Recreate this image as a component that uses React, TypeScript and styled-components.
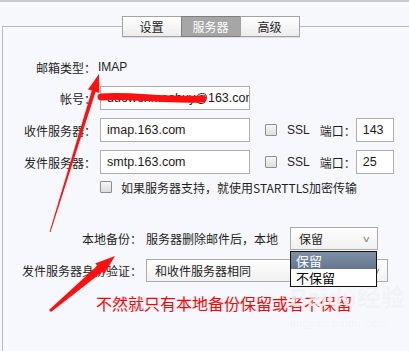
import React from 'react';
import styled, { createGlobalStyle } from 'styled-components';

const GlobalStyle = createGlobalStyle`
  html, body {
    margin: 0;
    padding: 0;
    background: #f7f8fd;
  }
  body {
    font-family: "Noto Sans CJK SC", "Liberation Sans", sans-serif;
    font-size: 12px;
    color: #1e1e1e;
  }
`;

const Page = styled.div`
  position: relative;
  width: 409px;
  height: 351px;
  overflow: hidden;
  box-sizing: border-box;
  border-top: 2px solid #c8c9d1;
  padding-top: 24px;
`;

const Frame = styled.div`
  margin-left: 2px;
  width: 417px;
  height: 340px;
  box-sizing: border-box;
  border-top: 1px solid #b9b9b9;
  border-left: 1px solid #b9b9b9;
`;

const TabBar = styled.div`
  display: flex;
  justify-content: center;
  margin-top: -11px;
`;

const Tab = styled.div<{ $active?: boolean }>`
  width: 60px;
  height: 21px;
  box-sizing: border-box;
  display: flex;
  align-items: center;
  justify-content: center;
  font-size: 12px;
  margin-left: -1px;
  border: 1px solid ${({ $active }) => ($active ? '#7f7f7f' : '#a3a3a3')};
  color: ${({ $active }) => ($active ? '#ffffff' : '#222')};
  background: ${({ $active }) =>
    $active ? '#a6a6a6' : 'linear-gradient(#ffffff, #ececec)'};
  box-shadow: 0 1px 0 #dedee6;
`;

const Form = styled.div`
  display: flex;
  flex-direction: column;
`;

const Row = styled.div<{ $mt: number; $label?: number }>`
  display: grid;
  grid-template-columns: ${({ $label }) => $label ?? 93}px auto;
  column-gap: 4px;
  align-items: center;
  height: 24px;
  margin-top: ${({ $mt }) => $mt}px;
`;

const Label = styled.div`
  text-align: right;
  white-space: nowrap;
`;

const Value = styled.div`
  display: flex;
  align-items: center;
  white-space: nowrap;
`;

const Plain = styled.span`
  font-family: "Liberation Sans", "Noto Sans CJK SC", sans-serif;
  font-size: 12px;
  margin-left: -2px;
`;

const TextBox = styled.div<{ $w: number }>`
  width: ${({ $w }) => $w}px;
  height: 24px;
  box-sizing: border-box;
  border: 1px solid #aeaeae;
  background: #fff;
  padding: 0 6px;
  display: flex;
  align-items: center;
  overflow: hidden;
  white-space: nowrap;
  font-family: "Liberation Sans", sans-serif;
  font-size: 12.5px;
  color: #1a1a1a;
`;

const Check = styled.span`
  display: inline-block;
  width: 12px;
  height: 12px;
  box-sizing: border-box;
  border: 1px solid #8e8e8e;
  border-radius: 1px;
  background: linear-gradient(#f6f6f6, #dcdcdc);
`;

const Ssl = styled.span`
  font-family: "Liberation Sans", sans-serif;
  font-size: 12px;
  margin: 0 10px 0 10px;
`;

const Inline = styled.span<{ $ml?: number }>`
  margin-left: ${({ $ml }) => $ml ?? 0}px;
`;

const SelectWrap = styled.div`
  position: relative;
`;

const SelectBox = styled.div<{ $w: number }>`
  width: ${({ $w }) => $w}px;
  height: 23px;
  box-sizing: border-box;
  border: 1px solid #ababab;
  background: linear-gradient(#ffffff, #f1f1f1);
  display: flex;
  align-items: center;
  justify-content: space-between;
  padding: 0 8px 0 8px;
`;

const Chevron = styled.span`
  font-size: 9px;
  color: #7a7a7a;
  transform: scaleX(1.3);
`;

const DropList = styled.div`
  position: absolute;
  left: 0;
  top: 24px;
  width: 87px;
  box-sizing: border-box;
  border: 1px solid #111;
  background: #fff;
  z-index: 2;
`;

const Option = styled.div<{ $sel?: boolean }>`
  height: 17px;
  line-height: 17px;
  padding-left: 5px;
  font-size: 13px;
  color: ${({ $sel }) => ($sel ? '#fff' : '#000')};
  background: ${({ $sel }) => ($sel ? 'linear-gradient(#7d90a6, #64778e)' : '#fff')};
`;

const Note = styled.div`
  margin-top: 9px;
  height: 24px;
  display: flex;
  align-items: center;
  padding-left: 93px;
  color: #ff0000;
  font-size: 16px;
`;

const Watermark = styled.div`
  position: absolute;
  left: 290px;
  top: 284px;
  color: rgba(200, 200, 210, 0.22);
  font-family: "Liberation Sans", "Noto Sans CJK SC", sans-serif;
  line-height: 1;
  text-shadow: 0 0 1px rgba(255, 255, 255, 0.9);
`;

const WmBig = styled.div`
  font-size: 24px;
  font-weight: bold;
`;

const WmSmall = styled.div`
  font-size: 11px;
  margin-top: 8px;
  letter-spacing: 0.5px;
`;

const Overlay = styled.svg`
  position: absolute;
  left: 0;
  top: 0;
  pointer-events: none;
  z-index: 3;
`;

export default function App() {
  return (
    <>
      <GlobalStyle />
      <Page>
        <Frame>
          <TabBar>
            <Tab>设置</Tab>
            <Tab $active>服务器</Tab>
            <Tab>高级</Tab>
          </TabBar>
          <Form>
            <Row $mt={18}>
              <Label>邮箱类型：</Label>
              <Value>
                <Plain>IMAP</Plain>
              </Value>
            </Row>
            <Row $mt={7}>
              <Label>帐号：</Label>
              <Value>
                <TextBox $w={150}>duowenmaohuy@163.com</TextBox>
              </Value>
            </Row>
            <Row $mt={8}>
              <Label>收件服务器：</Label>
              <Value>
                <TextBox $w={150}>imap.163.com</TextBox>
                <Inline $ml={15} />
                <Check />
                <Ssl>SSL</Ssl>
                <span>端口：</span>
                <TextBox $w={38}>143</TextBox>
              </Value>
            </Row>
            <Row $mt={8}>
              <Label>发件服务器：</Label>
              <Value>
                <TextBox $w={150}>smtp.163.com</TextBox>
                <Inline $ml={15} />
                <Check />
                <Ssl>SSL</Ssl>
                <span>端口：</span>
                <TextBox $w={38}>25</TextBox>
              </Value>
            </Row>
            <Row $mt={1}>
              <span />
              <Value>
                <Check />
                <Inline $ml={9}>如果服务器支持，就使用STARTTLS加密传输</Inline>
              </Value>
            </Row>
            <Row $mt={27} $label={139}>
              <Label>本地备份：</Label>
              <Value>
                <span>服务器删除邮件后，本地</span>
                <Inline $ml={12} />
                <SelectWrap>
                  <SelectBox $w={88}>
                    <span>保留</span>
                    <Chevron>v</Chevron>
                  </SelectBox>
                  <DropList>
                    <Option $sel>保留</Option>
                    <Option>不保留</Option>
                  </DropList>
                </SelectWrap>
              </Value>
            </Row>
            <Row $mt={8} $label={139}>
              <Label>发件服务器身份验证：</Label>
              <Value>
                <SelectBox $w={242}>
                  <span>和收件服务器相同</span>
                  <Chevron>v</Chevron>
                </SelectBox>
              </Value>
            </Row>
            <Note>不然就只有本地备份保留或者不保留</Note>
          </Form>
        </Frame>
        <Watermark>
          <WmBig>Baidu经验</WmBig>
          <WmSmall>jingyan.baidu.com</WmSmall>
        </Watermark>
        <Overlay width="409" height="351" viewBox="0 0 409 351">
          <path
            d="M101 95 C 130 92, 160 99, 203 97"
            stroke="#ff1010"
            strokeWidth="7"
            strokeLinecap="round"
            fill="none"
          />
          <polygon
            points="49.5,230 91.8,88.6 88,87.4 99,72 99.4,91 95.6,89.8 50.5,230"
            fill="#ff1010"
          />
          <polygon
            points="49,308 97.5,263.5 95.1,261.4 115,254 104.1,272.2 102.2,269.9 51,310"
            fill="#ff1010"
          />
        </Overlay>
      </Page>
    </>
  );
}
